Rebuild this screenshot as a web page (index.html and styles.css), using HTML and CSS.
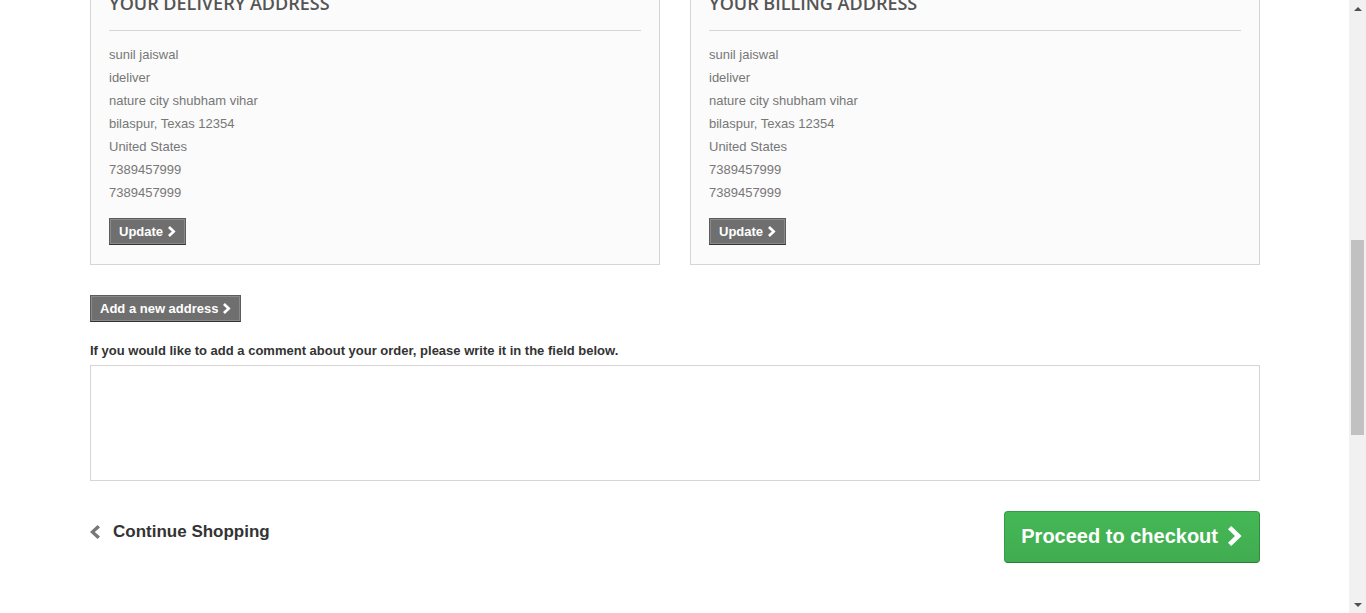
FILE: index.html
```html
<!DOCTYPE html>
<html lang="en">
<head>
<meta charset="utf-8">
<title>Addresses</title>
<link rel="stylesheet" href="styles.css">
</head>
<body>
<div class="viewport">
  <div class="main">
    <div class="page">
      <div class="addresses">
        <div class="address-box">
          <h3 class="subheading">Your delivery address</h3>
          <ul class="address-lines">
            <li>sunil jaiswal</li>
            <li>ideliver</li>
            <li>nature city shubham vihar</li>
            <li>bilaspur, Texas 12354</li>
            <li>United States</li>
            <li>7389457999</li>
            <li>7389457999</li>
          </ul>
          <a class="btn-small" href="#"><span>Update <svg class="chev-sm" viewBox="0 0 8 11" width="8" height="11"><polygon points="0,1.9 1.9,0 7.6,5.5 1.9,11 0,9.1 3.8,5.5"/></svg></span></a>
        </div>
        <div class="address-box">
          <h3 class="subheading">Your billing address</h3>
          <ul class="address-lines">
            <li>sunil jaiswal</li>
            <li>ideliver</li>
            <li>nature city shubham vihar</li>
            <li>bilaspur, Texas 12354</li>
            <li>United States</li>
            <li>7389457999</li>
            <li>7389457999</li>
          </ul>
          <a class="btn-small" href="#"><span>Update <svg class="chev-sm" viewBox="0 0 8 11" width="8" height="11"><polygon points="0,1.9 1.9,0 7.6,5.5 1.9,11 0,9.1 3.8,5.5"/></svg></span></a>
        </div>
      </div>

      <a class="btn-small add-address" href="#"><span>Add a new address <svg class="chev-sm" viewBox="0 0 8 11" width="8" height="11"><polygon points="0,1.9 1.9,0 7.6,5.5 1.9,11 0,9.1 3.8,5.5"/></svg></span></a>

      <label class="comment-label" for="message">If you would like to add a comment about your order, please write it in the field below.</label>
      <textarea class="comment" id="message"></textarea>

      <div class="cart-nav">
        <a class="continue" href="#"><svg class="chev-left" viewBox="0 0 10 14" width="10" height="14"><polygon points="10,2.4 7.6,0 0,7 7.6,14 10,11.6 4.8,7"/></svg>Continue Shopping</a>
        <a class="checkout" href="#"><span>Proceed to checkout</span><svg class="chev-lg" viewBox="0 0 14 20" width="14" height="20"><polygon points="0,3.2 3.2,0 13.6,10 3.2,20 0,16.8 7,10"/></svg></a>
      </div>
    </div>
  </div>
  <div class="scrollbar">
    <div class="sb-arrow"><svg viewBox="0 0 8 4" width="8" height="4"><polygon points="0,4 4,0 8,4"/></svg></div>
    <div class="sb-track"><div class="sb-thumb"></div></div>
    <div class="sb-arrow"><svg viewBox="0 0 8 4" width="8" height="4"><polygon points="0,0 8,0 4,4"/></svg></div>
  </div>
</div>
</body>
</html>
```

FILE: styles.css
```css
html, body {
  margin: 0;
  padding: 0;
  height: 613px;
  overflow: hidden;
  background: #fff;
}

body {
  font-family: "Liberation Sans", Arial, sans-serif;
  font-size: 13px;
  color: #777;
}

.viewport {
  display: flex;
  height: 613px;
  overflow: hidden;
}

.main {
  flex: 1;
  min-width: 0;
  overflow: hidden;
}

.page {
  width: 1170px;
  margin: -23px 0 0 90px;
}

.addresses {
  display: grid;
  grid-template-columns: 570px 570px;
  column-gap: 30px;
}

.address-box {
  background: #fbfbfb;
  border: 1px solid #d6d4d4;
  padding: 14px 18px 19px;
}

.subheading {
  margin: 0 0 12px;
  padding: 0 0 16px;
  border-bottom: 1px solid #d6d4d4;
  font-family: "Open Sans", "Liberation Sans", sans-serif;
  font-weight: 600;
  font-size: 18px;
  line-height: 22px;
  color: #555454;
  text-transform: uppercase;
}

.address-lines {
  list-style: none;
  margin: 0;
  padding: 0;
  line-height: 23px;
  color: #777;
}

.btn-small {
  display: flex;
  width: fit-content;
  margin-top: 14px;
  border: 1px solid;
  border-color: #5c5c5c #5c5c5c #333 #5c5c5c;
  background: #6f6f6f;
  color: #fff;
  font-weight: bold;
  font-size: 13px;
  line-height: 17px;
  text-decoration: none;
}

.btn-small span {
  display: flex;
  align-items: center;
  gap: 5px;
  padding: 3px 8px;
  border: 1px solid #8b8a8a;
}

.chev-sm {
  fill: #fff;
  display: block;
}

.add-address {
  margin-top: 30px;
}

.comment-label {
  display: block;
  margin-top: 20px;
  font-weight: bold;
  font-size: 13px;
  line-height: 18px;
  color: #333;
}

.comment {
  display: block;
  width: 100%;
  height: 116px;
  box-sizing: border-box;
  margin: 5px 0 0;
  border: 1px solid #d6d4d4;
  background: #fff;
  resize: none;
  font-family: "Liberation Sans", Arial, sans-serif;
}

.cart-nav {
  display: flex;
  justify-content: space-between;
  align-items: flex-start;
  margin-top: 30px;
}

.continue {
  display: flex;
  align-items: center;
  gap: 13px;
  margin-top: 9px;
  font-weight: bold;
  font-size: 17px;
  line-height: 24px;
  color: #333;
  text-decoration: none;
}

.chev-left {
  display: block;
  fill: #777;
  width: 10px;
  height: 14px;
}

.checkout {
  display: flex;
  align-items: center;
  gap: 10px;
  padding: 12px 17px 14px 16px;
  border: 1px solid;
  border-color: #399a49 #2f8c3d #2a7f36 #399a49;
  border-radius: 4px;
  background: linear-gradient(#44b855, #41ac51);
  color: #fff;
  font-weight: bold;
  font-size: 20px;
  line-height: 24px;
  text-decoration: none;
}

.chev-lg {
  display: block;
  fill: #fff;
}

.scrollbar {
  width: 17px;
  flex: none;
  background: #f1f1f1;
  display: flex;
  flex-direction: column;
}

.sb-arrow {
  height: 17px;
  display: flex;
  align-items: center;
  justify-content: center;
  flex: none;
}

.sb-arrow svg {
  fill: #505050;
  display: block;
}

.sb-track {
  flex: 1;
  padding-top: 223px;
}

.sb-thumb {
  width: 13px;
  height: 195px;
  margin: 0 auto;
  background: #c1c1c1;
}
```
